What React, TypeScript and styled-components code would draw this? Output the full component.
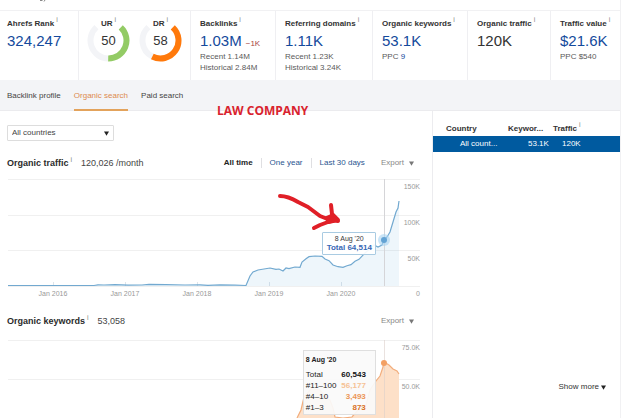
import React from "react";
import styled, { createGlobalStyle } from "styled-components";

const GlobalStyle = createGlobalStyle`
  * { box-sizing: border-box; }
  body {
    margin: 0;
    background: #fff;
    color: #3a3a3a;
    font: 8px/10px "Liberation Sans", Arial, sans-serif;
    overflow: hidden;
  }
  a { color: inherit; text-decoration: none; }
  button, select { font: inherit; color: inherit; }
`;

const Page = styled.div`
  position: relative;
  margin-right: 19px;
  border-right: 1px solid #f1f1f3;
`;

const TopStrip = styled.div`
  height: 10px;
  padding-left: 40px;
  line-height: 0;
`;

const Metrics = styled.section`
  display: grid;
  grid-template-columns:
    minmax(0, 78fr) minmax(0, 112fr) minmax(0, 85fr) minmax(0, 97fr)
    minmax(0, 95fr) minmax(0, 83fr) minmax(0, 70fr);
  min-height: 70px;
  border-top: 1px solid #f1f1f3;
`;

const Card = styled.div`
  padding: 8px 0 0 9px;
  border-left: 1px solid #efeff2;
  white-space: nowrap;
  &:first-child { padding-left: 7px; border-left: 0; }
`;

const Label = styled.div`
  font-weight: 700;
  color: #333;
`;

const Hint = styled.sup`
  margin-left: 2px;
  font-size: 7px;
  font-weight: 400;
  line-height: 0;
  color: #888;
`;

const Value = styled.div<{ $plain?: boolean }>`
  margin-top: 1px;
  font-size: 15px;
  line-height: 21px;
  color: ${(p) => (p.$plain ? "#333" : "#144a9c")};
`;

const Delta = styled.span`
  margin-left: 4px;
  font-size: 8px;
  line-height: 0;
  color: #a8453f;
`;

const Sub = styled.div`
  line-height: 11px;
  color: #5a5a5a;
  a { color: #144a9c; }
`;

const Gauges = styled(Card)`
  display: flex;
  justify-content: center;
  gap: 9px;
  padding-left: 0;
`;

const GaugeBox = styled.div`
  position: relative;
  width: 43px;
  height: 43px;
`;

const GaugeText = styled.div`
  position: absolute;
  inset: 0;
  text-align: center;
`;

const GaugeValue = styled.div`
  font-size: 13px;
  line-height: 22px;
  margin-top: 1px;
  color: #333;
`;

const Tabs = styled.nav`
  display: flex;
  gap: 13px;
  height: 31px;
  padding-left: 7px;
  background: #f3f4f7;
  border-bottom: 1px solid #ebebee;
`;

const Tab = styled.a<{ $active?: boolean }>`
  height: 31px;
  line-height: 31px;
  color: ${(p) => (p.$active ? "#dd8a4e" : "#444")};
  border-bottom: 2px solid ${(p) => (p.$active ? "#e3a35c" : "transparent")};
`;

const Note = styled.div`
  position: absolute;
  top: 103px;
  left: 217px;
  font: 700 12px/16px "Open Sans", sans-serif;
  color: #d9232e;
`;

const Main = styled.main`
  display: grid;
  grid-template-columns: minmax(0, 1fr) 188px;
`;

const CountryFilter = styled.label`
  position: relative;
  display: block;
  width: 107px;
  margin: 14px 0 0 7px;
  select {
    display: block;
    width: 100%;
    height: 16px;
    padding: 0 4px;
    appearance: none;
    background: #fff;
    border: 1px solid #ddd;
    border-radius: 1px;
    color: #444;
  }
  svg {
    position: absolute;
    right: 5px;
    top: 6px;
    pointer-events: none;
  }
`;

const SectionHead = styled.header<{ $gap: number }>`
  display: flex;
  align-items: center;
  height: 12px;
  margin-top: ${(p) => p.$gap}px;
  padding: 0 18px 0 7px;
`;

const Title = styled.h2`
  margin: 0;
  font-size: 9px;
  line-height: 12px;
  color: #2b2b2b;
`;

const Count = styled.span`
  margin-left: 9px;
  font-size: 9px;
  color: #444;
`;

const Controls = styled.div`
  display: flex;
  align-items: center;
  margin-left: auto;
`;

const Range = styled.button<{ $active?: boolean }>`
  padding: 0 8px;
  border: 0;
  border-left: 1px solid ${(p) => (p.$active ? "transparent" : "#dfdfe2")};
  background: none;
  line-height: 10px;
  font-weight: ${(p) => (p.$active ? 700 : 400)};
  color: ${(p) => (p.$active ? "#222" : "#2a5590")};
`;

const MenuButton = styled.button<{ $dark?: boolean }>`
  display: flex;
  align-items: center;
  gap: ${(p) => (p.$dark ? 2 : 5)}px;
  margin-left: 8px;
  padding: 0;
  border: 0;
  background: none;
  color: ${(p) => (p.$dark ? "#333" : "#888")};
`;

const ChartBox = styled.div`
  position: relative;
  > svg { display: block; width: 100%; height: auto; }
  > svg text {
    font-size: 7px;
    fill: #999;
  }
`;

const TrafficTip = styled.div`
  position: absolute;
  left: 74.6%;
  top: 47%;
  width: 54px;
  padding: 1px 0 2px;
  background: rgba(255, 255, 255, 0.92);
  border: 1px solid #a9cbe2;
  border-radius: 1px;
  text-align: center;
  line-height: 9px;
  font-size: 7px;
  white-space: nowrap;
  strong { display: block; font-size: 8px; color: #3767b5; }
`;

const KeywordTip = styled.div`
  position: absolute;
  left: 70.1%;
  top: 25%;
  width: 73px;
  height: 65px;
  padding: 4px 9px 0 2px;
  background: rgba(250, 250, 250, 0.93);
  border: 1px solid #dfdfdf;
  color: #222;
`;

const TipDate = styled.div`
  margin-bottom: 4px;
  font-size: 7px;
  font-weight: 700;
`;

const TipTable = styled.table`
  width: 100%;
  border-collapse: collapse;
  line-height: 11px;
  th, td { padding: 0; }
  th { text-align: left; font-weight: 400; }
`;

const TipValue = styled.td<{ $color: string }>`
  text-align: right;
  font-weight: 700;
  color: ${(p) => p.$color};
`;

const Sidebar = styled.aside`
  display: flex;
  flex-direction: column;
  padding: 11px 0 26px;
  border-left: 1px solid #ececef;
`;

const Countries = styled.table`
  width: 100%;
  table-layout: fixed;
  border-collapse: collapse;
  th, td { padding: 0; white-space: nowrap; text-align: left; }
  th { height: 14px; color: #333; }
  th:first-child { width: 75px; padding-left: 13px; }
  th:nth-child(2) { width: 45px; }
`;

const SelectedRow = styled.tr`
  height: 16px;
  background: #005a9f;
  color: #fff;
  td:first-child { padding-left: 27px; }
  td:nth-child(2) { padding-left: 20px; }
  td:nth-child(3) { padding-left: 9px; }
`;

const MoreRow = styled.div`
  display: flex;
  justify-content: flex-end;
  margin-top: auto;
  padding-right: 14px;
`;

const Info = () => <Hint>i</Hint>;

const Caret = ({ color = "#222" }: { color?: string }) => (
  <svg width="5" height="5" viewBox="0 0 5 5" aria-hidden="true">
    <path d="M0 .5h5L2.5 4.7z" fill={color} />
  </svg>
);

const point = (deg: number) => {
  const a = (deg * Math.PI) / 180;
  return `${21.5 + 18 * Math.sin(a)} ${21.5 - 18 * Math.cos(a)}`;
};

const Gauge = ({ name, value, end, color }: { name: string; value: number; end: number; color: string }) => (
  <GaugeBox>
    <svg width="43" height="43" fill="none" strokeWidth="6" aria-hidden="true">
      <path d={`M${point(end)}A18 18 0 0 1 ${point(318)}`} stroke="#f3f4f7" />
      <path d={`M${point(43)}A18 18 0 0 1 ${point(end)}`} stroke={color} />
    </svg>
    <GaugeText>
      <Label>{name}<Info /></Label>
      <GaugeValue>{value}</GaugeValue>
    </GaugeText>
  </GaugeBox>
);

const trafficLine =
  "M8 111.5H94L98 110.8L104 111L115 110.6L128 111.2L142 111L149 110.3L166 110.6L185 111L200 110.8L208 111.3L220 110.9L235 111.2L246 111.5L250 102L253 98L258 96L270 94L276 95.3L279 95L283 97L286 94L289 94.7L295 93L300 93.3L302 88L306 84.7L309 82.7L315 82L322 82.3L325 85L329 86.7L333 91L338 92.7L343 93.3L347 91.7L351 90.7L355 87.3L359 85.3L365 79L371 74L374 71L378 73L382 71L384 66L387 63L390 58L393 48L396 38L398 34L399 27";

const keywordArea =
  "M297 79L301 71L304 58L311 50L320 51L326 58L330 61L333 69L335 78L343 79L352 78L358 71L366 66L370 51L376 42L380 37L383 28L384 23L389 26L393 30L397 32L399 35";

export default function App() {
  return (
    <>
      <GlobalStyle />
      <Page>
        <TopStrip>
          <svg width="7" height="3" aria-hidden="true">
            <path d="M0 .5h2.500M5 0l-1 1.500" stroke="#888" fill="none" />
          </svg>
        </TopStrip>
        <Metrics>
          <Card>
            <Label>Ahrefs Rank<Info /></Label>
            <Value>324,247</Value>
          </Card>
          <Gauges>
            <Gauge name="UR" value={50} end={181} color="#93cb65" />
            <Gauge name="DR" value={58} end={207} color="#ff790b" />
          </Gauges>
          <Card>
            <Label>Backlinks<Info /></Label>
            <Value>1.03M<Delta>−1K</Delta></Value>
            <Sub>Recent 1.14M</Sub>
            <Sub>Historical 2.84M</Sub>
          </Card>
          <Card>
            <Label>Referring domains<Info /></Label>
            <Value>1.11K</Value>
            <Sub>Recent 1.23K</Sub>
            <Sub>Historical 3.24K</Sub>
          </Card>
          <Card>
            <Label>Organic keywords<Info /></Label>
            <Value>53.1K</Value>
            <Sub>PPC <a href="#ppc">9</a></Sub>
          </Card>
          <Card>
            <Label>Organic traffic<Info /></Label>
            <Value $plain>120K</Value>
          </Card>
          <Card>
            <Label>Traffic value<Info /></Label>
            <Value>$21.6K</Value>
            <Sub>PPC $540</Sub>
          </Card>
        </Metrics>
        <Tabs>
          <Tab href="#backlinks">Backlink profile</Tab>
          <Tab href="#organic" $active>Organic search</Tab>
          <Tab href="#paid">Paid search</Tab>
        </Tabs>
        <Note>LAW COMPANY</Note>
        <Main>
          <div>
            <CountryFilter>
              <select aria-label="Country">
                <option>All countries</option>
              </select>
              <Caret />
            </CountryFilter>
            <SectionHead $gap={16}>
              <Title>Organic traffic<Info /></Title>
              <Count>120,026 /month</Count>
              <Controls>
                <Range $active>All time</Range>
                <Range>One year</Range>
                <Range>Last 30 days</Range>
                <MenuButton>Export<Caret color="#777" /></MenuButton>
              </Controls>
            </SectionHead>
            <ChartBox>
              <svg viewBox="0 -5 432 135" role="img" aria-label="Organic traffic">
                <path d="M8 5.500H420M8 41.500H420M8 76.500H420M8 112.500H420" stroke="#f0f0f0" />
                <path d="M53.500 108v4M125.500 108v4M197.500 108v4M269.500 108v4M341.500 108v4" stroke="#dde4ea" />
                <path d={`${trafficLine}V112H8Z`} fill="#5ba4d8" fillOpacity=".1" />
                <path d="M384.500 5V112" stroke="#d5d5d8" />
                <path d={trafficLine} fill="none" stroke="#72a9d0" strokeWidth="1.200" />
                <circle cx="384" cy="66" r="6" fill="#a9d4f1" fillOpacity=".6" />
                <circle cx="384" cy="66" r="3" fill="#63a3d4" />
                <g textAnchor="end">
                  <text x="420" y="15">150K</text>
                  <text x="420" y="51">100K</text>
                  <text x="420" y="87">50K</text>
                  <text x="420" y="122">0</text>
                </g>
                <g textAnchor="middle">
                  <text x="53" y="122">Jan 2016</text>
                  <text x="125" y="122">Jan 2017</text>
                  <text x="197" y="122">Jan 2018</text>
                  <text x="269" y="122">Jan 2019</text>
                  <text x="341" y="122">Jan 2020</text>
                </g>
                <path
                  d="M280 22Q288 22 298 28L308 33L320 42L330 46L338 47M331 31L332 40L338 46L328 48L320 51L314 54"
                  fill="none" stroke="#e01f27" strokeWidth="4" strokeLinecap="round" strokeLinejoin="round"
                />
                <path d="M324 43L331 40L340 47L328 50Z" fill="#e01f27" />
              </svg>
              <TrafficTip>8 Aug '20<strong>Total 64,514</strong></TrafficTip>
            </ChartBox>
            <SectionHead $gap={11}>
              <Title>Organic keywords<Info /></Title>
              <Count>53,058</Count>
              <Controls>
                <MenuButton>Export<Caret color="#777" /></MenuButton>
              </Controls>
            </SectionHead>
            <ChartBox>
              <svg viewBox="0 -12 432 91" role="img" aria-label="Organic keywords">
                <path d="M8 1.500H420M8 40.500H420" stroke="#f0f0f0" />
                <path d={`${keywordArea}V79Z`} fill="#fde0c8" />
                <path d={keywordArea} fill="none" stroke="#f2ad7c" strokeWidth="1.200" />
                <path d="M384.500 1V79" stroke="#dccfca" strokeOpacity=".6" />
                <circle cx="384" cy="24" r="3" fill="#f3a063" />
                <g textAnchor="end">
                  <text x="420" y="11">75.0K</text>
                  <text x="420" y="50">50.0K</text>
                </g>
              </svg>
              <KeywordTip>
                <TipDate>8 Aug '20</TipDate>
                <TipTable>
                  <tbody>
                    <tr><th>Total</th><TipValue $color="#111">60,543</TipValue></tr>
                    <tr><th>#11–100</th><TipValue $color="#f6c295">56,177</TipValue></tr>
                    <tr><th>#4–10</th><TipValue $color="#ec9556">3,493</TipValue></tr>
                    <tr><th>#1–3</th><TipValue $color="#d9711f">873</TipValue></tr>
                  </tbody>
                </TipTable>
              </KeywordTip>
            </ChartBox>
          </div>
          <Sidebar>
            <Countries>
              <thead>
                <tr><th>Country</th><th>Keywor...</th><th>Traffic<Info /></th></tr>
              </thead>
              <tbody>
                <SelectedRow><td>All count...</td><td>53.1K</td><td>120K</td></SelectedRow>
              </tbody>
            </Countries>
            <MoreRow>
              <MenuButton $dark>Show more<Caret /></MenuButton>
            </MoreRow>
          </Sidebar>
        </Main>
      </Page>
    </>
  );
}
